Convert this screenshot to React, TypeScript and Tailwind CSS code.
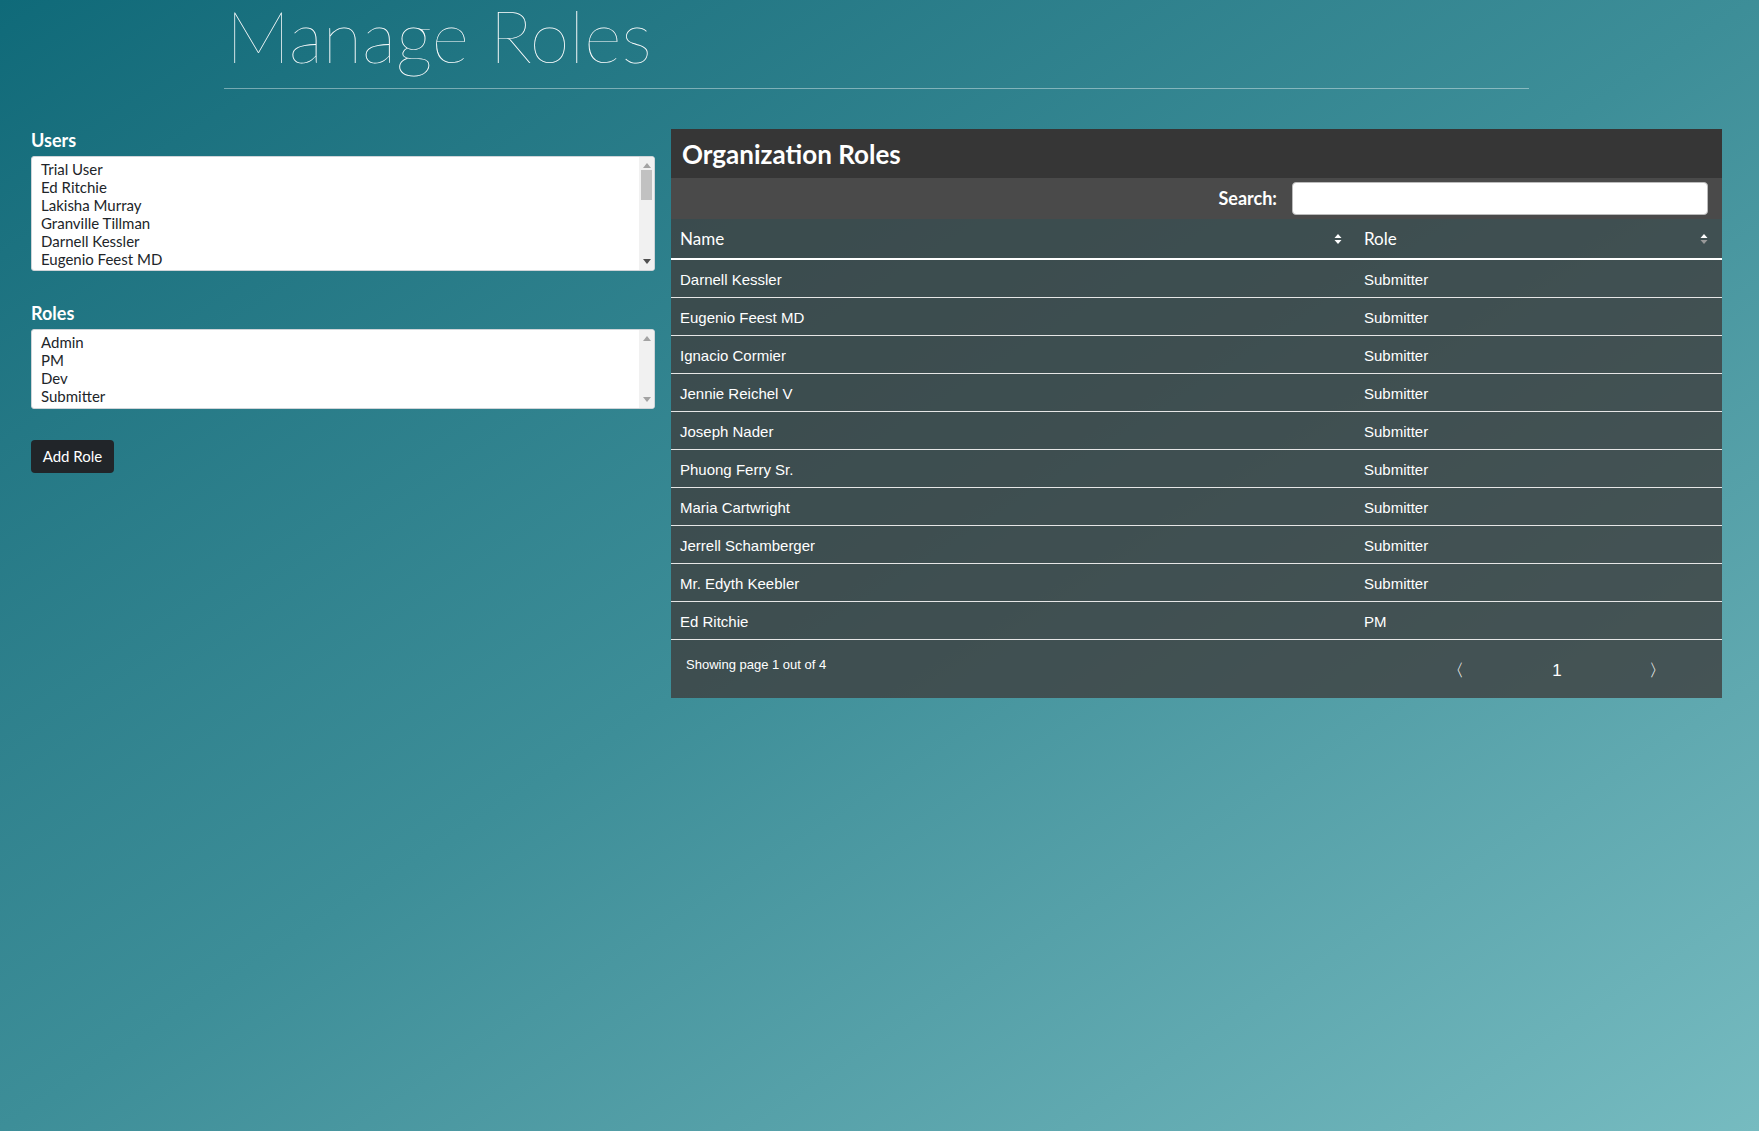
import React from 'react';

const users = [
  'Trial User',
  'Ed Ritchie',
  'Lakisha Murray',
  'Granville Tillman',
  'Darnell Kessler',
  'Eugenio Feest MD',
  'Ignacio Cormier',
];

const roles = ['Admin', 'PM', 'Dev', 'Submitter'];

const rows: [string, string][] = [
  ['Darnell Kessler', 'Submitter'],
  ['Eugenio Feest MD', 'Submitter'],
  ['Ignacio Cormier', 'Submitter'],
  ['Jennie Reichel V', 'Submitter'],
  ['Joseph Nader', 'Submitter'],
  ['Phuong Ferry Sr.', 'Submitter'],
  ['Maria Cartwright', 'Submitter'],
  ['Jerrell Schamberger', 'Submitter'],
  ['Mr. Edyth Keebler', 'Submitter'],
  ['Ed Ritchie', 'PM'],
];

// DataTables-style sort arrows
const SortIcon = ({ dim }: { dim?: boolean }) => (
  <svg width="8" height="12" viewBox="0 0 8 12">
    <polygon points="4,1 7.5,5 0.5,5" fill="#ffffff" />
    <polygon points="0.5,7 7.5,7 4,11" fill={dim ? '#9a9a9a' : '#ffffff'} />
  </svg>
);

const Arrow = ({ down, color }: { down?: boolean; color: string }) => (
  <svg width="8" height="5" viewBox="0 0 8 5">
    <polygon points={down ? '0,0 8,0 4,5' : '4,0 8,5 0,5'} fill={color} />
  </svg>
);

// multi-select list with a classic scrollbar
const ListBox = ({
  items,
  height,
  scrollable,
}: {
  items: string[];
  height: string;
  scrollable?: boolean;
}) => (
  <div className={`mt-[5px] flex ${height} overflow-hidden rounded-[3px] border border-[#cfd4d8] bg-white`}>
    <div className="flex-1 overflow-hidden px-[9px] pt-[3px] text-[15px] leading-[18px] text-[#212529]">
      {items.map((i) => (
        <div key={i}>{i}</div>
      ))}
    </div>
    <div className="flex w-[15px] flex-col items-center bg-[#f1f1f1] py-[6px]">
      <Arrow color="#a3a3a3" />
      {scrollable && <div className="mt-[2px] h-[30px] w-[11px] bg-[#c1c1c1]" />}
      <div className="flex-1" />
      <Arrow down color={scrollable ? '#505050' : '#a3a3a3'} />
    </div>
  </div>
);

const ubuntu = { fontFamily: 'Lato, "Noto Sans", sans-serif' };

const App: React.FC = () => {
  return (
    <div
      className="min-h-[1131px] w-full bg-linear-to-br from-[#0f6a79] via-[#3d8e98] to-[#76bbc0] text-white"
      style={ubuntu}
    >
      <div className="ml-[224px] flex w-[1305px] border-b border-white/40 pb-[10px]">
        <h1 className="-mt-[8px] pl-[2px] text-[72px] font-thin leading-[86px] text-white" style={{ fontFamily: 'Lato, sans-serif' }}>
          Manage Roles
        </h1>
      </div>

      <div className="mt-[40px] flex gap-4 pl-[31px]">
        {/* left column */}
        <div className="w-[624px]">
          <label className="block text-[18px] font-bold leading-[22px]">Users</label>
          <ListBox items={users} height="h-[115px]" scrollable />

          <label className="mt-[31px] block text-[18px] font-bold leading-[22px]">Roles</label>
          <ListBox items={roles} height="h-[80px]" />

          <button className="mt-[31px] h-[33px] w-[83px] rounded-[4px] bg-[#212529] text-[15px] text-white">
            Add Role
          </button>
        </div>

        {/* right panel */}
        <div className="w-[1051px]">
          <div className="flex h-[49px] items-center bg-[#363636] pl-[11px]">
            <h2 className="text-[26px] font-bold leading-none">Organization Roles</h2>
          </div>
          <div className="flex h-[41px] items-center justify-end gap-[15px] bg-[#4a4a4a] pr-[14px]">
            <span className="text-[18px] font-bold">Search:</span>
            <input className="h-[33px] w-[416px] rounded-[4px] border border-[#bbb] bg-white px-2 text-black outline-none" />
          </div>

          <div className="bg-[rgba(62,62,62,0.8)]" style={{ fontFamily: '"Liberation Sans", Arial, sans-serif' }}>
            <div className="flex h-[41px] items-center border-b-2 border-white pt-[1px]" style={ubuntu}>
              <div className="flex w-[684px] items-center justify-between pl-[9px] pr-[13px] text-[17px]">
                <span>Name</span>
                <SortIcon />
              </div>
              <div className="flex flex-1 items-center justify-between pl-[9px] pr-[14px] text-[17px]">
                <span>Role</span>
                <SortIcon dim />
              </div>
            </div>

            {rows.map(([name, role]) => (
              <div key={name} className="flex h-[38px] items-center border-b border-[#e6e6e6] pt-[3px] text-[15px]">
                <div className="w-[684px] pl-[9px]">{name}</div>
                <div className="flex-1 pl-[9px]">{role}</div>
              </div>
            ))}

            <div className="flex h-[58px] items-start">
              <div className="w-[684px] pl-[15px] pt-[15px] text-[13px]">Showing page 1 out of 4</div>
              <div className="flex flex-1 items-center pt-[18px] text-[17px]">
                <span className="ml-[92px] w-[10px] text-center">〈</span>
                <span className="ml-[95px] w-[10px] text-center">1</span>
                <span className="ml-[87px] w-[10px] text-center">〉</span>
              </div>
            </div>
          </div>
        </div>
      </div>
    </div>
  );
};

export default App;
